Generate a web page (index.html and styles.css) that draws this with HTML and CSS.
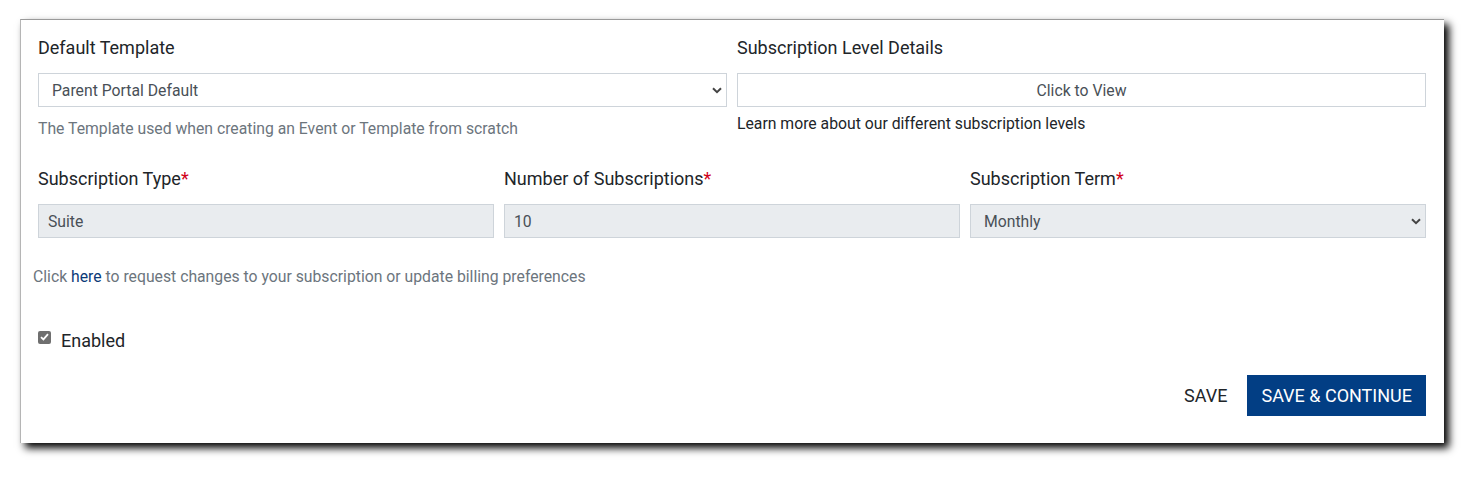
FILE: index.html
```html
<!DOCTYPE html>
<html>
<head>
<meta charset="utf-8">
<link rel="stylesheet" href="styles.css">
</head>
<body>
<div class="card">
  <div class="row two">
    <div class="field">
      <div class="label">Default Template</div>
      <div class="control select">
        <span>Parent Portal Default</span>
        <svg class="chev" width="10" height="7" viewBox="0 0 10 7"><path d="M1 1.2 L5 5.2 L9 1.2" fill="none" stroke="#444" stroke-width="2"/></svg>
      </div>
      <div class="help">The Template used when creating an Event or Template from scratch</div>
    </div>
    <div class="field">
      <div class="label">Subscription Level Details</div>
      <div class="control view">Click to View</div>
      <div class="learn">Learn more about our different subscription levels</div>
    </div>
  </div>
  <div class="row three">
    <div class="field">
      <div class="label">Subscription Type<span class="req">*</span></div>
      <div class="control disabled"><span>Suite</span></div>
    </div>
    <div class="field">
      <div class="label">Number of Subscriptions<span class="req">*</span></div>
      <div class="control disabled"><span>10</span></div>
    </div>
    <div class="field">
      <div class="label">Subscription Term<span class="req">*</span></div>
      <div class="control disabled select">
        <span>Monthly</span>
        <svg class="chev" width="10" height="7" viewBox="0 0 10 7"><path d="M1 1.2 L5 5.2 L9 1.2" fill="none" stroke="#444" stroke-width="2"/></svg>
      </div>
    </div>
  </div>
  <div class="note">Click <a class="link">here</a> to request changes to your subscription or update billing preferences</div>
  <div class="check">
    <span class="box"><svg width="9" height="8" viewBox="0 0 9 8"><path d="M1 4.2 L3.4 6.4 L8 1.2" fill="none" stroke="#fff" stroke-width="1.8"/></svg></span>
    <span class="check-label">Enabled</span>
  </div>
  <div class="actions">
    <button class="btn plain">SAVE</button>
    <button class="btn primary">SAVE &amp; CONTINUE</button>
  </div>
</div>
</body>
</html>
```
FILE: styles.css
```css
* { box-sizing: border-box; }
html, body { margin: 0; padding: 0; background: #fff; }
body {
  font-family: Roboto, "Liberation Sans", sans-serif;
  color: #212529;
  padding: 19px 36px 36px 20px;
}
.card {
  width: 1424px;
  height: 424px;
  background: #fff;
  border-top: 1px solid #9a9a9a;
  border-left: 1px solid #b5b5b5;
  box-shadow: 5px 5px 8px rgba(0,0,0,1);
  padding: 15px 18px 0 17px;
}
.row { display: grid; gap: 10px; }
.row.two { grid-template-columns: 1fr 1fr; }
.row.three { grid-template-columns: 1fr 1fr 1fr; margin-top: 27px; }
.label {
  font-size: 18px;
  line-height: 26px;
  color: #212529;
  margin-bottom: 12px;
}
.req { color: #d0021b; }
.control {
  height: 34px;
  border: 1px solid #ced4da;
  font-size: 15.75px;
  color: #495057;
  display: flex;
  align-items: center;
  padding: 0 13px;
  background: #fff;
}
.select { justify-content: space-between; padding-right: 4px; }
.disabled { background: #e9ecef; padding-left: 9px; }
.disabled.select { padding-left: 13px; }
.view { justify-content: center; }
.help {
  font-size: 15.75px;
  color: #6c757d;
  margin-top: 12px;
  line-height: 20px;
}
.learn {
  font-size: 15.75px;
  color: #212529;
  margin-top: 7px;
  line-height: 20px;
}
.note {
  font-size: 15.75px;
  color: #6c757d;
  margin: 29px 0 0 -5px;
  line-height: 20px;
}
.link { color: #0b3a78; text-decoration: none; }
.check {
  display: flex;
  align-items: center;
  margin-top: 41px;
  height: 24px;
}
.box {
  width: 13px;
  height: 13px;
  background: #6f6f6f;
  border-radius: 2px;
  display: flex;
  align-items: center;
  justify-content: center;
  margin: -6px 10px 0 0;
}
.check-label { font-size: 18px; color: #212529; }
.actions {
  display: flex;
  justify-content: flex-end;
  align-items: center;
  gap: 20px;
  margin-top: 23px;
}
.btn {
  font-family: Roboto, "Liberation Sans", sans-serif;
  font-size: 18px;
  border: none;
  cursor: pointer;
}
.plain { background: none; color: #212529; padding: 0; }
.primary {
  background: #023e84;
  color: #fff;
  height: 41px;
  padding: 0 14px;
}
```
